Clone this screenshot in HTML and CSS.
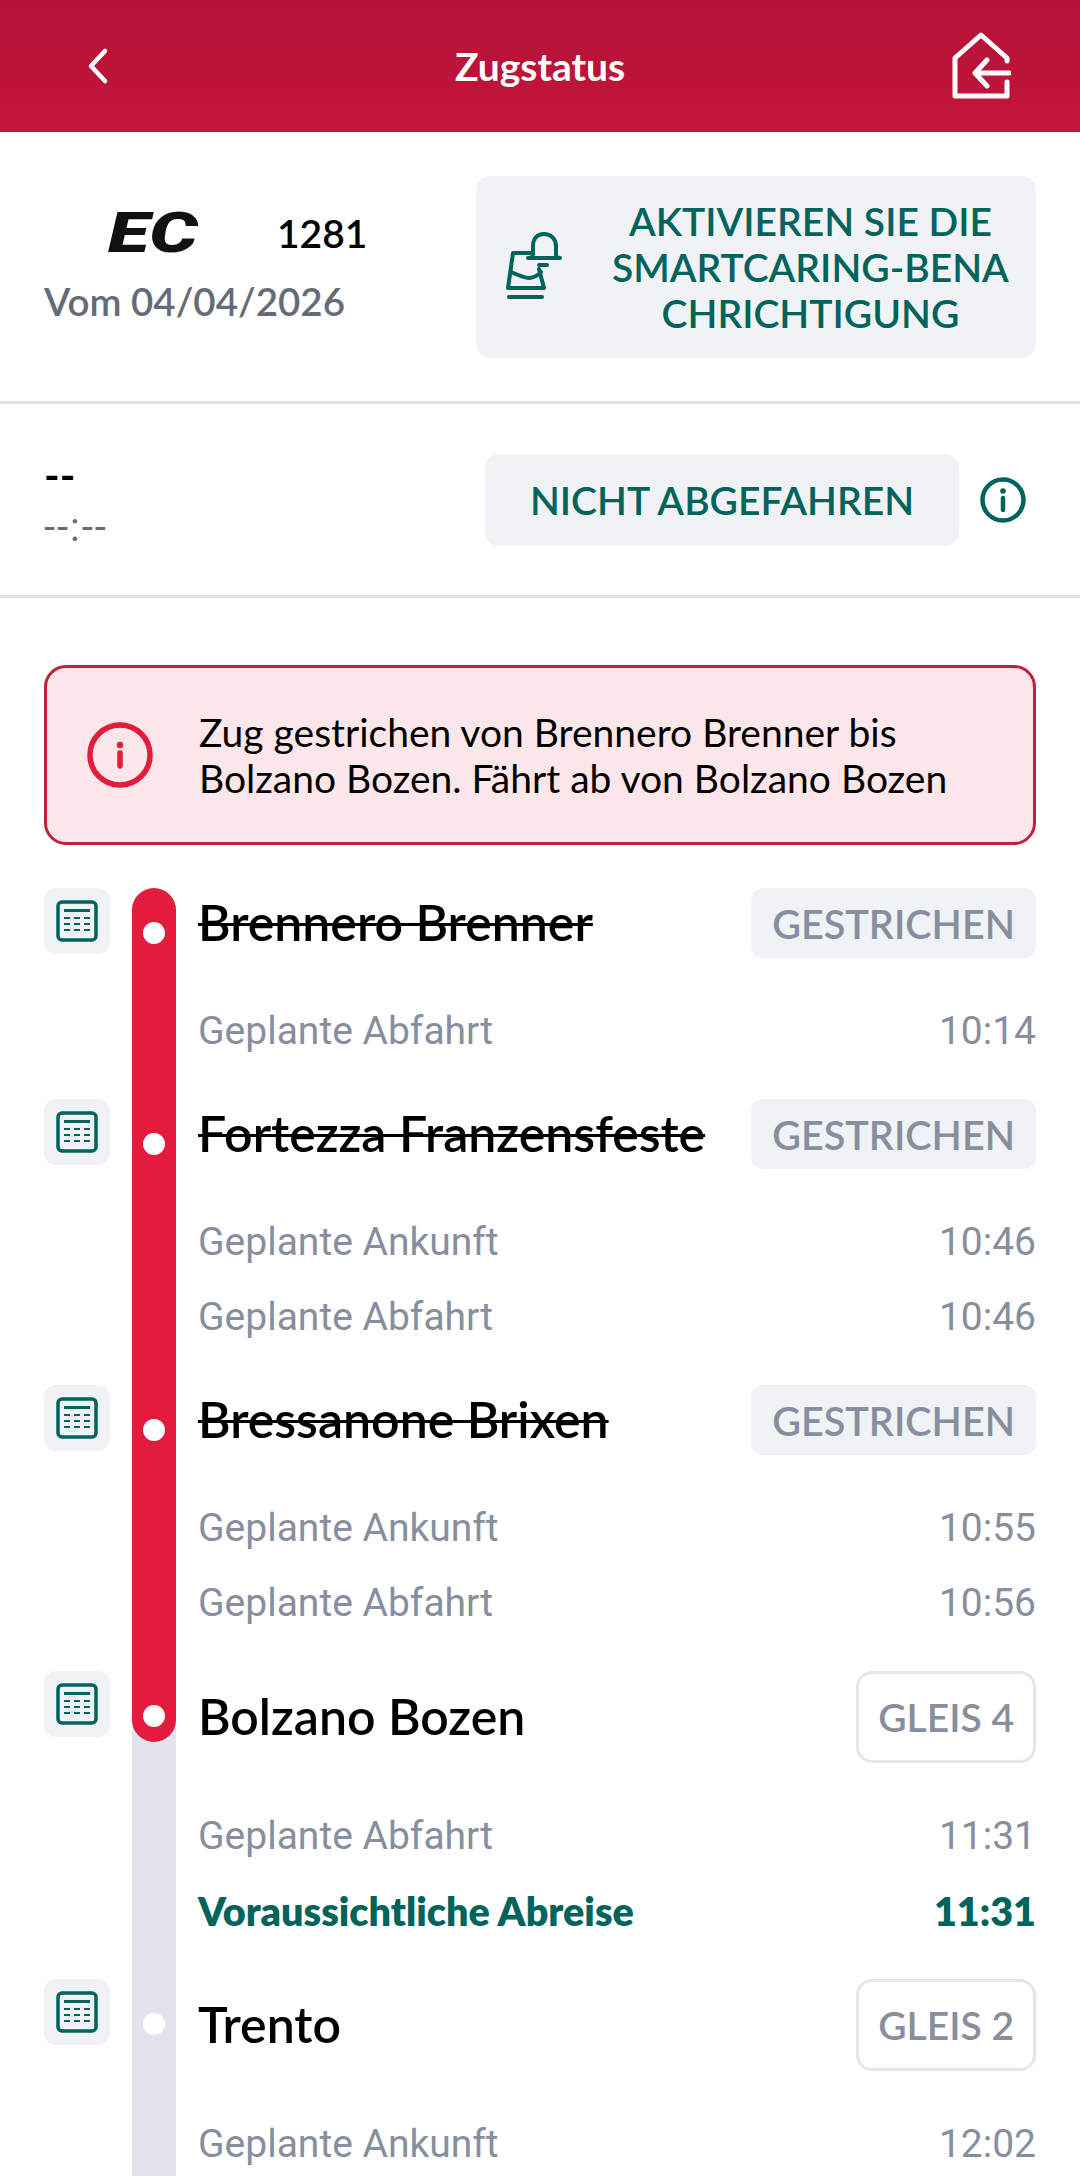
FILE: index.html
```html
<!DOCTYPE html>
<html lang="de">
<head>
<meta charset="utf-8">
<title>Zugstatus</title>
<link rel="stylesheet" href="styles.css">
</head>
<body>
<div class="page">
  <header class="topbar">
    <svg class="back" viewBox="0 0 28 40" width="28" height="40"><path d="M21 5 7 20l14 15" fill="none" stroke="#fff" stroke-width="4.500" stroke-linecap="round" stroke-linejoin="round"/></svg>
    <h1 class="title">Zugstatus</h1>
    <svg class="home" viewBox="0 0 60 72" width="60" height="72"><path d="M56 31V28L30 5 4 28V66H56V52M58 43H24M36 30 24 43l12 13" fill="none" stroke="#fff" stroke-width="5" stroke-linecap="round" stroke-linejoin="round"/></svg>
  </header>

  <section class="train">
    <div class="train-info">
      <div class="train-id"><span class="ec"><span class="ec-text">EC</span></span><span class="num">1281</span></div>
      <div class="date">Vom 04/04/2026</div>
    </div>
    <div class="smart">
      <svg class="bell" viewBox="0 0 60 72" width="60" height="72"><g fill="none" stroke="#00635c" stroke-width="4" stroke-linecap="round" stroke-linejoin="round"><path d="M25 21H8L3 56H39L34 37"/><path d="M6 40c9 4 15 6 18 6s9-2 12-6"/><path d="M4 65H37"/><path d="M23 26H55c-2 0-4-1-4-3V14C51 7 46 2 39 2S28 7 28 14v9c0 2-3 3-5 3z"/><path d="M34 33H42"/></g></svg>
      <span class="smart-text">AKTIVIEREN SIE DIE<br>SMARTCARING-BENA<br>CHRICHTIGUNG</span>
    </div>
  </section>

  <section class="state">
    <div class="state-left">
      <div class="dash">--</div>
      <div class="clock">--:--</div>
    </div>
    <div class="state-btn">NICHT ABGEFAHREN</div>
    <svg class="info" viewBox="0 0 46 46" width="46" height="46"><circle cx="23" cy="23" r="20.500" fill="none" stroke="#00635c" stroke-width="4.500"/><circle cx="23" cy="14" r="2.800" fill="#00635c"/><path d="M23 21V33" stroke="#00635c" stroke-width="4.500" stroke-linecap="round"/></svg>
  </section>

  <div class="alert">
    <svg class="alert-icon" viewBox="0 0 66 66" width="66" height="66"><circle cx="33" cy="33" r="30" fill="none" stroke="#e31c3d" stroke-width="5.500"/><circle cx="33" cy="23" r="3.200" fill="#e31c3d"/><path d="M33 31V44" stroke="#e31c3d" stroke-width="5.500" stroke-linecap="round"/></svg>
    <p class="alert-text">Zug gestrichen von Brennero Brenner bis Bolzano Bozen. Fährt ab von Bolzano Bozen</p>
  </div>

  <main class="stops">
    <article class="stop stop-a">
      <div class="ticon"><svg viewBox="0 0 42 42" width="42" height="42"><use href="#board"/></svg></div>
      <div class="rail rail-red rail-first"><span class="dot"></span></div>
      <div class="body">
        <div class="head"><span class="name struck">Brennero Brenner</span><span class="tag">GESTRICHEN</span></div>
        <div class="row"><span>Geplante Abfahrt</span><span>10:14</span></div>
      </div>
    </article>
    <article class="stop stop-b">
      <div class="ticon"><svg viewBox="0 0 42 42" width="42" height="42"><use href="#board"/></svg></div>
      <div class="rail rail-red"><span class="dot"></span></div>
      <div class="body">
        <div class="head"><span class="name struck">Fortezza Franzensfeste</span><span class="tag">GESTRICHEN</span></div>
        <div class="row"><span>Geplante Ankunft</span><span>10:46</span></div>
        <div class="row"><span>Geplante Abfahrt</span><span>10:46</span></div>
      </div>
    </article>
    <article class="stop stop-b">
      <div class="ticon"><svg viewBox="0 0 42 42" width="42" height="42"><use href="#board"/></svg></div>
      <div class="rail rail-red"><span class="dot"></span></div>
      <div class="body">
        <div class="head"><span class="name struck">Bressanone Brixen</span><span class="tag">GESTRICHEN</span></div>
        <div class="row"><span>Geplante Ankunft</span><span>10:55</span></div>
        <div class="row"><span>Geplante Abfahrt</span><span>10:56</span></div>
      </div>
    </article>
    <article class="stop stop-c">
      <div class="ticon"><svg viewBox="0 0 42 42" width="42" height="42"><use href="#board"/></svg></div>
      <div class="rail rail-grey"><div class="rail-end"><span class="dot"></span></div></div>
      <div class="body">
        <div class="head head-gleis"><span class="name">Bolzano Bozen</span><span class="gleis">GLEIS 4</span></div>
        <div class="row"><span>Geplante Abfahrt</span><span>11:31</span></div>
        <div class="row row-live"><span>Voraussichtliche Abreise</span><span>11:31</span></div>
      </div>
    </article>
    <article class="stop stop-last">
      <div class="ticon"><svg viewBox="0 0 42 42" width="42" height="42"><use href="#board"/></svg></div>
      <div class="rail rail-grey"><span class="dot"></span></div>
      <div class="body">
        <div class="head head-gleis"><span class="name">Trento</span><span class="gleis">GLEIS 2</span></div>
        <div class="row"><span>Geplante Ankunft</span><span>12:02</span></div>
      </div>
    </article>
  </main>
</div>
<svg class="defs" width="0" height="0"><defs><g id="board"><rect x="2" y="2" width="38" height="38" rx="4" fill="none" stroke="#00635c" stroke-width="3.500"/><path d="M8 10.500H34" stroke="#00635c" stroke-width="3"/><path d="M8 18H14M18 18H24M28 18H34M8 24H14M18 24H24M28 24H34M8 30H14M18 30H24M28 30H34" stroke="#00635c" stroke-width="2"/></g></defs></svg>
</body>
</html>
```
FILE: styles.css
```css
* { box-sizing: border-box; }
html, body { margin: 0; padding: 0; background: #fff; }
body { font-family: "Lato", "Liberation Sans", sans-serif; color: #000; }
.page { width: 1080px; height: 2176px; overflow: hidden; }
.defs { display: block; height: 0; }

.topbar {
  height: 132px;
  display: grid;
  grid-template-columns: 1fr auto 1fr;
  align-items: center;
  padding: 0 69px 0 84px;
  background: linear-gradient(#b31237, #c4153a);
}
.back { display: block; justify-self: start; }
.title { margin: 0 0 0 -15px; font-size: 39px; font-weight: 700; color: #fff; line-height: 1; }
.home { display: block; justify-self: end; }

.train {
  height: 272px;
  display: flex;
  justify-content: space-between;
  padding: 44px 44px 0;
  border-bottom: 3px solid #e4e4e6;
}
.train-info { width: 340px; padding-top: 30px; }
.train-id { display: flex; align-items: center; height: 54px; padding-left: 64px; }
.ec { display: inline-block; width: 169px; flex: none; }
.ec-text {
  display: inline-block;
  font-family: "Roboto", sans-serif;
  font-weight: 900;
  font-style: italic;
  font-size: 56px;
  line-height: 54px;
  transform: scaleX(1.36);
  transform-origin: left center;
  color: #111;
}
.num { font-size: 39px; font-weight: 600; color: #000; }
.date { margin-top: 18px; font-size: 38.500px; font-weight: 600; color: #666b78; white-space: nowrap; }
.smart {
  width: 560px;
  height: 182px;
  display: flex;
  align-items: center;
  gap: 47px;
  padding: 0 12px 0 29px;
  background: #f0f2f5;
  border-radius: 14px;
}
.bell { flex: none; margin-top: 2px; }
.smart-text {
  font-size: 39px;
  font-weight: 600;
  line-height: 46px;
  text-align: center;
  color: #00635c;
  white-space: nowrap;
}

.state {
  height: 194px;
  display: flex;
  align-items: center;
  padding: 0 54px 0 44px;
  border-bottom: 3px solid #e4e4e6;
}
.state-left { flex: 1; }
.dash { font-size: 42px; font-weight: 700; line-height: 44px; color: #000; }
.clock { margin-top: 12px; font-family: "Roboto", sans-serif; font-size: 40px; letter-spacing: 2px; line-height: 38px; color: #666b78; }
.state-btn {
  width: 474px;
  height: 92px;
  display: flex;
  align-items: center;
  justify-content: center;
  font-size: 39px;
  font-weight: 600;
  color: #00635c;
  background: #f0f2f5;
  border-radius: 14px;
}
.info { margin-left: 21px; flex: none; }

.alert {
  height: 180px;
  margin: 67px 44px 0;
  display: flex;
  align-items: center;
  gap: 46px;
  padding: 0 30px 0 40px;
  background: #fbe7ea;
  border: 3px solid #c1233f;
  border-radius: 22px;
}
.alert-icon { flex: none; }
.alert-text { margin: 0; font-size: 39px; line-height: 46px; color: #000; }

.stops { margin: 43px 44px 0; }
.stop { display: grid; grid-template-columns: 66px 44px 1fr; column-gap: 22px; }
.ticon {
  width: 66px;
  height: 66px;
  display: flex;
  align-items: center;
  justify-content: center;
  background: #f0f2f5;
  border-radius: 12px;
}
.rail { display: flex; flex-direction: column; align-items: center; }
.rail-red { background: #e31c3d; padding-top: 34px; }
.rail-first { border-radius: 22px 22px 0 0; }
.rail-grey { background: #e1e4ec; padding-top: 34px; }
.stop-c .rail-grey { padding-top: 0; }
.rail-end {
  width: 44px;
  height: 71px;
  padding-top: 34px;
  display: flex;
  justify-content: center;
  background: #e31c3d;
  border-radius: 0 0 22px 22px;
}
.dot { width: 22px; height: 22px; border-radius: 50%; background: #fff; flex: none; display: block; }
.body { min-width: 0; }
.head { display: flex; align-items: center; justify-content: space-between; height: 70px; margin-bottom: 35px; }
.head-gleis { height: 92px; margin-bottom: 35px; }
.name { font-size: 50px; font-weight: 600; color: #000; white-space: nowrap; margin-bottom: 3px; }
.struck { text-decoration: line-through; text-decoration-thickness: 3px; }
.tag {
  height: 70px;
  padding: 0 21px;
  display: flex;
  align-items: center;
  font-size: 39.500px;
  font-weight: 600;
  color: #878e9e;
  background: #f0f2f5;
  border-radius: 12px;
}
.gleis {
  height: 92px;
  padding: 0 19px;
  display: flex;
  align-items: center;
  font-size: 39px;
  font-weight: 600;
  color: #878e9e;
  background: #fff;
  border: 3px solid #e4e6ea;
  border-radius: 16px;
}
.row {
  display: flex;
  justify-content: space-between;
  height: 75px;
  align-items: center;
  font-family: "Roboto", sans-serif;
  font-size: 39px;
  color: #878e9e;
}
.row-live { font-family: "Lato", sans-serif; font-size: 39.500px; font-weight: 800; color: #00635c; }
.stop-a { height: 211px; }
.stop-b { height: 286px; }
.stop-c { height: 308px; }
.stop-last { height: 320px; }
```
